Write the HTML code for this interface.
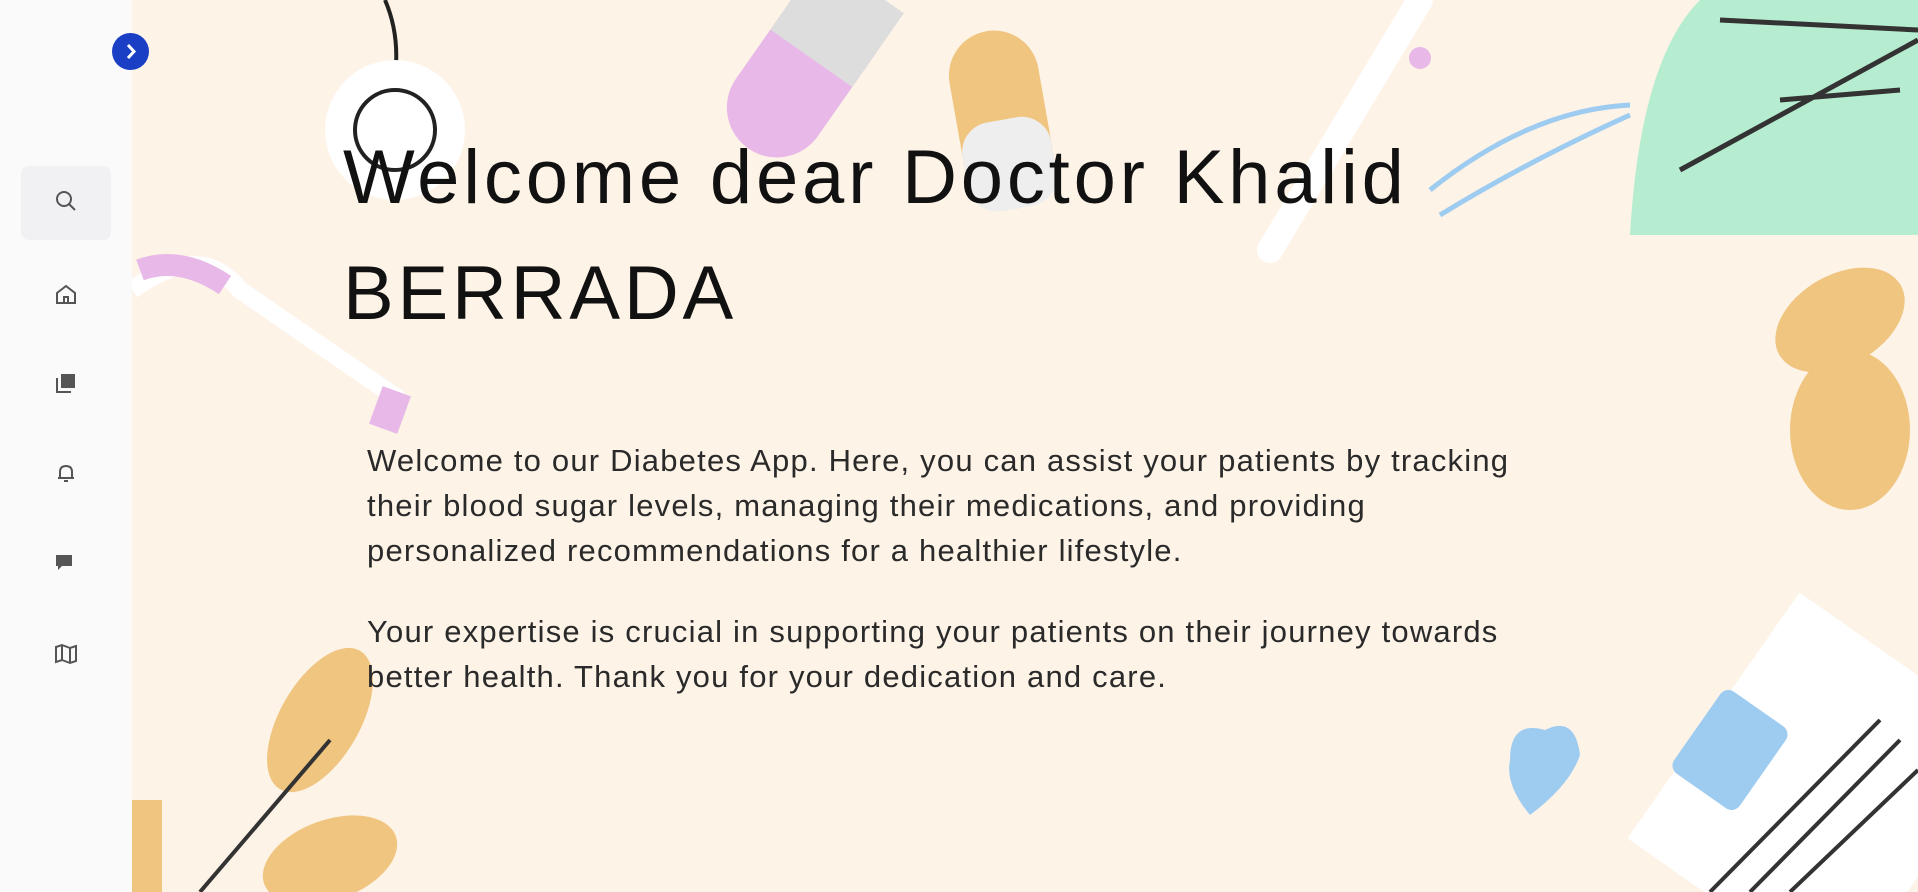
<!DOCTYPE html>
<html><head><meta charset="utf-8"><style>
html,body{margin:0;padding:0;width:1918px;height:892px;overflow:hidden;background:#fdf3e7;font-family:"Liberation Sans",sans-serif;position:relative}
.side{position:absolute;left:0;top:0;width:132px;height:892px;background:#fafafa;}
.tog{position:absolute;left:112px;top:33px;width:37px;height:37px;border-radius:50%;background:#1a3fc4;z-index:5}
.srch{position:absolute;left:21px;top:166px;width:90px;height:74px;border-radius:8px;background:#f1f1f4}
.ic{position:absolute;left:54px;width:24px;height:24px}
h1{position:absolute;left:343px;top:120px;margin:0;font-size:76px;font-weight:500;line-height:116px;color:#111;width:1250px;letter-spacing:3.8px}
.p{position:absolute;left:367px;width:1300px;font-size:31px;line-height:45px;color:#2a2a2a;letter-spacing:1.2px}
</style></head><body>
<svg width="1918" height="892" style="position:absolute;left:0;top:0">
 <path d="M385 0 Q398 30 396 65" stroke="#222" stroke-width="4" fill="none"/>
 <circle cx="395" cy="130" r="70" fill="#fff"/>
 <circle cx="395" cy="130" r="40" fill="none" stroke="#222" stroke-width="4"/>
 <g transform="rotate(35 790 80)"><rect x="745" y="-40" width="100" height="200" rx="50" fill="#e8b8e8"/><rect x="745" y="-40" width="100" height="90" fill="#ddd"/></g>
 <g transform="rotate(-10 1000 110)"><rect x="955" y="30" width="90" height="180" rx="45" fill="#f0c580"/><rect x="955" y="120" width="90" height="90" rx="30" fill="#eee"/></g>
 <path d="M1420 0 L1270 250" stroke="#fff" stroke-width="26" stroke-linecap="round"/>
 <circle cx="1420" cy="58" r="11" fill="#e8b8e8"/>
 <path d="M1430 190 Q1530 110 1630 105" stroke="#9ecbf0" stroke-width="5" fill="none"/>
 <path d="M1440 215 Q1530 160 1630 115" stroke="#9ecbf0" stroke-width="5" fill="none"/>
 <path d="M1700 0 L1918 0 L1918 235 L1630 235 Q1640 60 1700 0Z" fill="#b6ecd0"/>
 <path d="M1720 20 L1918 30 M1680 170 L1918 40 M1780 100 L1900 90" stroke="#333" stroke-width="5" fill="none"/>
 <ellipse cx="1840" cy="320" rx="70" ry="45" fill="#f0c580" transform="rotate(-30 1840 320)"/>
 <ellipse cx="1850" cy="430" rx="60" ry="80" fill="#f0c580"/>
 <path d="M132 290 Q200 240 240 290 L400 400" stroke="#fff" stroke-width="18" fill="none"/>
 <path d="M140 270 Q180 255 225 285" stroke="#e8b8e8" stroke-width="22" fill="none"/>
 <rect x="375" y="390" width="30" height="40" fill="#e8b8e8" transform="rotate(20 390 410)"/>
 <ellipse cx="320" cy="720" rx="40" ry="80" fill="#f0c580" transform="rotate(30 320 720)"/>
 <ellipse cx="330" cy="860" rx="70" ry="40" fill="#f0c580" transform="rotate(-20 330 860)"/>
 <path d="M200 892 L330 740" stroke="#333" stroke-width="4"/>
 <rect x="132" y="800" width="30" height="92" fill="#f0c580"/>
 <path d="M1510 760 q0 -40 35 -30 q30 -15 35 25 q-10 30 -50 60 q-25 -30 -20 -55z" fill="#9ecbf0"/>
 <rect x="1690" y="640" width="260" height="300" fill="#fff" transform="rotate(35 1820 790)"/>
 <rect x="1690" y="700" width="80" height="100" rx="10" fill="#9ecbf0" transform="rotate(35 1730 750)"/>
 <path d="M1710 892 L1880 720 M1750 892 L1900 740 M1790 892 L1918 770" stroke="#333" stroke-width="4"/>
</svg>
<div class="side"></div>
<div class="tog"><svg width="37" height="37"><path d="M16 12 L22 18.5 L16 25" stroke="#fff" stroke-width="3" fill="none"/></svg></div>
<div class="srch"></div>
<svg class="ic" style="top:189px"><circle cx="10" cy="10" r="7" stroke="#555" stroke-width="2" fill="none"/><path d="M15 15 L21 21" stroke="#555" stroke-width="2"/></svg>
<svg class="ic" style="top:282px"><path d="M3 11 L12 4 L21 11 V21 H3Z M10 21 V15 H14 V21" stroke="#555" stroke-width="2" fill="none"/></svg>
<svg class="ic" style="top:371px"><rect x="7" y="3" width="14" height="14" fill="#555"/><path d="M3 7 V21 H17" stroke="#555" stroke-width="2" fill="none"/></svg>
<svg class="ic" style="top:461px"><path d="M6 17 V11 Q6 5 12 5 Q18 5 18 11 V17 H6Z M4 17 H20 M10 20 H14" stroke="#555" stroke-width="2" fill="none"/></svg>
<svg class="ic" style="top:551px"><path d="M2 4 H18 V15 H8 L4 19 V15 H2Z" fill="#555"/></svg>
<svg class="ic" style="top:642px"><path d="M2 5 L8 3 L16 6 L22 4 V19 L16 21 L8 18 L2 20Z M8 3 V18 M16 6 V21" stroke="#555" stroke-width="2" fill="none"/></svg>
<h1>Welcome dear Doctor Khalid<br>BERRADA</h1>
<div class="p" style="top:438px">Welcome to our Diabetes App. Here, you can assist your patients by tracking<br>their blood sugar levels, managing their medications, and providing<br>personalized recommendations for a healthier lifestyle.</div>
<div class="p" style="top:609px">Your expertise is crucial in supporting your patients on their journey towards<br>better health. Thank you for your dedication and care.</div>
</body></html>
